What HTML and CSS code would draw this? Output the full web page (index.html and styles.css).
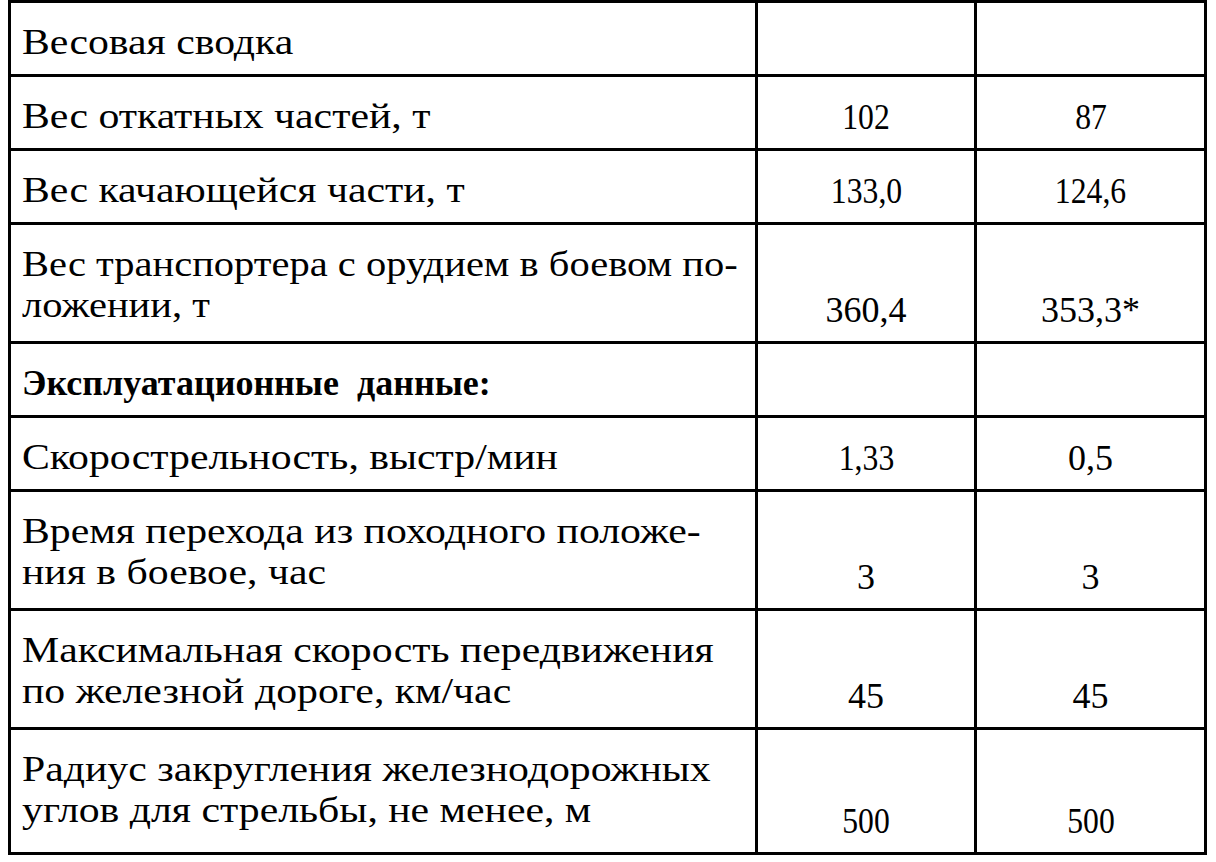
FILE: index.html
```html
<!DOCTYPE html>
<html lang="ru">
<head>
<meta charset="utf-8">
<title>Весовая сводка</title>
<link rel="stylesheet" href="styles.css">
</head>
<body>
<div class="sheet">
  <div class="cell text"><span class="wide">Весовая сводка</span></div>
  <div class="cell num"></div>
  <div class="cell num"></div>

  <div class="cell text"><span class="wide">Вес откатных частей, т</span></div>
  <div class="cell num"><span class="tight">102</span></div>
  <div class="cell num"><span class="tight">87</span></div>

  <div class="cell text"><span class="wide">Вес качающейся части, т</span></div>
  <div class="cell num"><span class="tight">133,0</span></div>
  <div class="cell num"><span class="tight">124,6</span></div>

  <div class="cell text"><span class="wide snug">Вес транспортера с орудием в боевом по-<br>ложении, т</span></div>
  <div class="cell num">360,4</div>
  <div class="cell num">353,3*</div>

  <div class="cell text bold">Эксплуатационные&nbsp; данные:</div>
  <div class="cell num"></div>
  <div class="cell num"></div>

  <div class="cell text"><span class="wide">Скорострельность, выстр/мин</span></div>
  <div class="cell num"><span class="tight">1,33</span></div>
  <div class="cell num">0,5</div>

  <div class="cell text"><span class="wide">Время перехода из походного положе-<br>ния в боевое, час</span></div>
  <div class="cell num">3</div>
  <div class="cell num">3</div>

  <div class="cell text"><span class="wide">Максимальная скорость передвижения<br>по железной дороге, км/час</span></div>
  <div class="cell num">45</div>
  <div class="cell num">45</div>

  <div class="cell text"><span class="wide">Радиус закругления железнодорожных<br>углов для стрельбы, не менее, м</span></div>
  <div class="cell num"><span class="tight">500</span></div>
  <div class="cell num"><span class="tight">500</span></div>
</div>
</body>
</html>
```

FILE: styles.css
```css
html, body {
  margin: 0;
  padding: 0;
  background: #ffffff;
}

.sheet {
  margin-left: 8px;
  display: grid;
  grid-template-columns: 747px 219px 230px;
  grid-template-rows: 74px 74px 74px 119px 74px 74px 119px 119px 125px;
  width: max-content;
  border-left: 3px solid #000;
  border-top: 3px solid #000;
  color: #000;
  font-family: "Liberation Serif", serif;
}

.cell {
  box-sizing: border-box;
  border-right: 3px solid #000;
  border-bottom: 3px solid #000;
  font-family: "Liberation Serif", serif;
  font-size: 36px;
  line-height: 41px;
}

.text {
  padding: 19px 6px 0 11px;
}

.wide {
  display: block;
  transform: scaleX(1.16);
  transform-origin: 0 0;
}

.wide.snug {
  transform: scaleX(1.125);
}

.bold {
  font-weight: bold;
}

.num {
  display: flex;
  align-items: flex-end;
  justify-content: center;
  padding-bottom: 10px;
}

.tight {
  display: inline-block;
  transform: scaleX(0.88);
}
```
